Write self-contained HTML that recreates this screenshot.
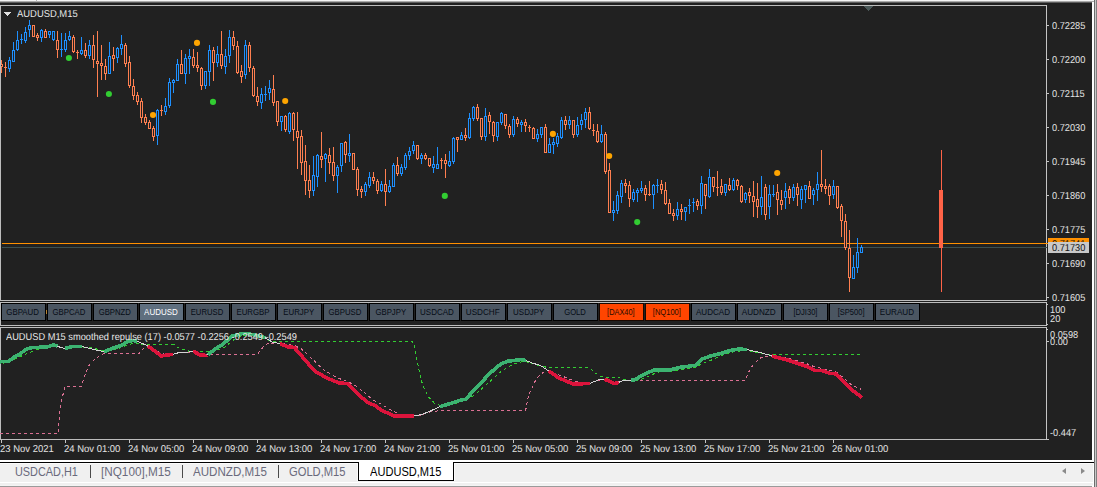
<!DOCTYPE html>
<html><head><meta charset="utf-8"><title>AUDUSD,M15</title>
<style>
html,body{margin:0;padding:0;}
body{width:1097px;height:487px;overflow:hidden;background:#212121;position:relative;font-family:"Liberation Sans",Arial,sans-serif;}
div{position:absolute;box-sizing:border-box;}
.h{left:0;width:1097px;height:1px;}
.frame{left:0;width:1046px;border:1px solid #bdbdbd;border-right:none;border-bottom:1px solid #bdbdbd;}
.axis{left:1046px;width:1px;background:#c4c4c4;}
.pl{left:1052px;font-size:10px;text-rendering:geometricPrecision;line-height:12px;color:#e4e4e4;white-space:nowrap;transform:scaleX(.924);transform-origin:0 0;}
.tick{left:1047px;width:2px;height:1px;background:#c4c4c4;}
.btn{top:303px;width:45px;height:18px;border:1px solid #000;background:#4b5662;color:#060c16;font-size:8.5px;line-height:16px;text-align:center;white-space:nowrap;}
.btn span{display:inline-block;transform-origin:50% 50%;position:relative;left:-0.5px;}
.btn.sel{background:#5f6f7f;color:#fff;}
.btn.hot{background:#ff4500;color:#2a0c00;border-color:#1a0800;}
.tt{top:440px;width:1px;height:3px;background:#c4c4c4;}
.tl{top:444px;font-size:10px;text-rendering:geometricPrecision;line-height:12px;color:#e4e4e4;white-space:nowrap;transform:scaleX(.948);transform-origin:0 0;}
.tab{top:464px;height:16px;font-size:12px;line-height:16px;color:#6a6a7c;white-space:nowrap;transform-origin:0 0;}
.sep{top:465px;width:1px;height:13px;background:#4a4a4a;}
svg{position:absolute;left:0;top:0;}
</style></head><body>
<!-- top strip -->
<div class="h" style="top:0;background:#f4f4f4"></div>
<div class="h" style="top:1px;background:#aaaaaa"></div>
<div class="h" style="top:2px;background:#5c5c5c"></div>
<div class="h" style="top:3px;height:2px;background:#202020"></div>
<div style="left:36px;top:0;width:1px;height:2px;background:#b0b0b0"></div>
<!-- right window edge -->

<!-- panels -->
<div class="frame" style="top:5px;height:296px"></div>
<div class="frame" style="top:302px;height:24px"></div>
<div class="frame" style="top:327px;height:113px"></div>
<div class="axis" style="top:5px;height:296px"></div>
<div class="axis" style="top:302px;height:24px"></div>
<div class="axis" style="top:327px;height:113px"></div>

<svg width="1097" height="487" viewBox="0 0 1097 487">
<g shape-rendering="crispEdges">
<rect x="2" y="243" width="1046" height="1" fill="#ff9000"/>
<rect x="2" y="247" width="1045" height="1" fill="#3c5050"/>
<rect x="1" y="60" width="1" height="13" fill="#ff7f50"/>
<rect x="0" y="64" width="3" height="3" fill="#ff7f50"/>
<rect x="1" y="65" width="1" height="1" fill="#212121"/>
<rect x="5" y="62" width="1" height="15" fill="#ff7f50"/>
<rect x="4" y="67" width="3" height="1" fill="#ff7f50"/>
<rect x="9" y="57" width="1" height="15" fill="#1e90ff"/>
<rect x="8" y="60" width="3" height="9" fill="#1e90ff"/>
<rect x="9" y="61" width="1" height="7" fill="#212121"/>
<rect x="13" y="42" width="1" height="20" fill="#1e90ff"/>
<rect x="12" y="50" width="3" height="12" fill="#1e90ff"/>
<rect x="13" y="51" width="1" height="10" fill="#212121"/>
<rect x="17" y="31" width="1" height="20" fill="#1e90ff"/>
<rect x="16" y="40" width="3" height="10" fill="#1e90ff"/>
<rect x="17" y="41" width="1" height="8" fill="#212121"/>
<rect x="21" y="34" width="1" height="10" fill="#1e90ff"/>
<rect x="20" y="39" width="3" height="1" fill="#1e90ff"/>
<rect x="25" y="27" width="1" height="16" fill="#1e90ff"/>
<rect x="24" y="32" width="3" height="9" fill="#1e90ff"/>
<rect x="25" y="33" width="1" height="7" fill="#212121"/>
<rect x="29" y="20" width="1" height="17" fill="#1e90ff"/>
<rect x="28" y="25" width="3" height="5" fill="#1e90ff"/>
<rect x="29" y="26" width="1" height="3" fill="#212121"/>
<rect x="33" y="25" width="1" height="12" fill="#ff7f50"/>
<rect x="32" y="25" width="3" height="12" fill="#ff7f50"/>
<rect x="33" y="26" width="1" height="10" fill="#212121"/>
<rect x="37" y="33" width="1" height="8" fill="#ff7f50"/>
<rect x="36" y="35" width="3" height="3" fill="#ff7f50"/>
<rect x="37" y="36" width="1" height="1" fill="#212121"/>
<rect x="41" y="29" width="1" height="13" fill="#1e90ff"/>
<rect x="40" y="30" width="3" height="8" fill="#1e90ff"/>
<rect x="41" y="31" width="1" height="6" fill="#212121"/>
<rect x="45" y="29" width="1" height="9" fill="#ff7f50"/>
<rect x="44" y="31" width="3" height="7" fill="#ff7f50"/>
<rect x="45" y="32" width="1" height="5" fill="#212121"/>
<rect x="49" y="31" width="1" height="7" fill="#1e90ff"/>
<rect x="48" y="31" width="3" height="4" fill="#1e90ff"/>
<rect x="49" y="32" width="1" height="2" fill="#212121"/>
<rect x="53" y="31" width="1" height="10" fill="#1e90ff"/>
<rect x="52" y="31" width="3" height="9" fill="#1e90ff"/>
<rect x="53" y="32" width="1" height="7" fill="#212121"/>
<rect x="57" y="31" width="1" height="27" fill="#ff7f50"/>
<rect x="56" y="40" width="3" height="10" fill="#ff7f50"/>
<rect x="57" y="41" width="1" height="8" fill="#212121"/>
<rect x="61" y="33" width="1" height="24" fill="#1e90ff"/>
<rect x="60" y="49" width="3" height="1" fill="#1e90ff"/>
<rect x="65" y="33" width="1" height="19" fill="#1e90ff"/>
<rect x="64" y="40" width="3" height="10" fill="#1e90ff"/>
<rect x="65" y="41" width="1" height="8" fill="#212121"/>
<rect x="69" y="31" width="1" height="10" fill="#1e90ff"/>
<rect x="68" y="36" width="3" height="4" fill="#1e90ff"/>
<rect x="69" y="37" width="1" height="2" fill="#212121"/>
<rect x="73" y="35" width="1" height="18" fill="#ff7f50"/>
<rect x="72" y="37" width="3" height="15" fill="#ff7f50"/>
<rect x="73" y="38" width="1" height="13" fill="#212121"/>
<rect x="77" y="50" width="1" height="9" fill="#ff7f50"/>
<rect x="76" y="52" width="3" height="1" fill="#ff7f50"/>
<rect x="81" y="37" width="1" height="18" fill="#1e90ff"/>
<rect x="80" y="50" width="3" height="4" fill="#1e90ff"/>
<rect x="81" y="51" width="1" height="2" fill="#212121"/>
<rect x="85" y="43" width="1" height="15" fill="#ff7f50"/>
<rect x="84" y="50" width="3" height="6" fill="#ff7f50"/>
<rect x="85" y="51" width="1" height="4" fill="#212121"/>
<rect x="89" y="40" width="1" height="19" fill="#1e90ff"/>
<rect x="88" y="45" width="3" height="11" fill="#1e90ff"/>
<rect x="89" y="46" width="1" height="9" fill="#212121"/>
<rect x="93" y="35" width="1" height="33" fill="#ff7f50"/>
<rect x="92" y="45" width="3" height="15" fill="#ff7f50"/>
<rect x="93" y="46" width="1" height="13" fill="#212121"/>
<rect x="97" y="31" width="1" height="66" fill="#ff7f50"/>
<rect x="96" y="61" width="3" height="3" fill="#ff7f50"/>
<rect x="97" y="62" width="1" height="1" fill="#212121"/>
<rect x="101" y="45" width="1" height="35" fill="#ff7f50"/>
<rect x="100" y="63" width="3" height="3" fill="#ff7f50"/>
<rect x="101" y="64" width="1" height="1" fill="#212121"/>
<rect x="105" y="59" width="1" height="21" fill="#ff7f50"/>
<rect x="104" y="66" width="3" height="8" fill="#ff7f50"/>
<rect x="105" y="67" width="1" height="6" fill="#212121"/>
<rect x="109" y="42" width="1" height="32" fill="#1e90ff"/>
<rect x="108" y="56" width="3" height="18" fill="#1e90ff"/>
<rect x="109" y="57" width="1" height="16" fill="#212121"/>
<rect x="113" y="47" width="1" height="24" fill="#ff7f50"/>
<rect x="112" y="55" width="3" height="4" fill="#ff7f50"/>
<rect x="113" y="56" width="1" height="2" fill="#212121"/>
<rect x="117" y="47" width="1" height="16" fill="#1e90ff"/>
<rect x="116" y="48" width="3" height="10" fill="#1e90ff"/>
<rect x="117" y="49" width="1" height="8" fill="#212121"/>
<rect x="121" y="35" width="1" height="20" fill="#1e90ff"/>
<rect x="120" y="44" width="3" height="5" fill="#1e90ff"/>
<rect x="121" y="45" width="1" height="3" fill="#212121"/>
<rect x="125" y="43" width="1" height="24" fill="#ff7f50"/>
<rect x="124" y="45" width="3" height="19" fill="#ff7f50"/>
<rect x="125" y="46" width="1" height="17" fill="#212121"/>
<rect x="129" y="56" width="1" height="32" fill="#ff7f50"/>
<rect x="128" y="62" width="3" height="24" fill="#ff7f50"/>
<rect x="129" y="63" width="1" height="22" fill="#212121"/>
<rect x="133" y="79" width="1" height="21" fill="#ff7f50"/>
<rect x="132" y="86" width="3" height="10" fill="#ff7f50"/>
<rect x="133" y="87" width="1" height="8" fill="#212121"/>
<rect x="137" y="92" width="1" height="13" fill="#ff7f50"/>
<rect x="136" y="95" width="3" height="7" fill="#ff7f50"/>
<rect x="137" y="96" width="1" height="5" fill="#212121"/>
<rect x="141" y="98" width="1" height="25" fill="#ff7f50"/>
<rect x="140" y="101" width="3" height="17" fill="#ff7f50"/>
<rect x="141" y="102" width="1" height="15" fill="#212121"/>
<rect x="145" y="114" width="1" height="11" fill="#ff7f50"/>
<rect x="144" y="117" width="3" height="6" fill="#ff7f50"/>
<rect x="145" y="118" width="1" height="4" fill="#212121"/>
<rect x="149" y="120" width="1" height="9" fill="#ff7f50"/>
<rect x="148" y="122" width="3" height="7" fill="#ff7f50"/>
<rect x="149" y="123" width="1" height="5" fill="#212121"/>
<rect x="153" y="126" width="1" height="15" fill="#ff7f50"/>
<rect x="152" y="128" width="3" height="9" fill="#ff7f50"/>
<rect x="153" y="129" width="1" height="7" fill="#212121"/>
<rect x="157" y="109" width="1" height="36" fill="#1e90ff"/>
<rect x="156" y="110" width="3" height="26" fill="#1e90ff"/>
<rect x="157" y="111" width="1" height="24" fill="#212121"/>
<rect x="161" y="105" width="1" height="11" fill="#ff7f50"/>
<rect x="160" y="110" width="3" height="1" fill="#ff7f50"/>
<rect x="165" y="98" width="1" height="17" fill="#1e90ff"/>
<rect x="164" y="106" width="3" height="6" fill="#1e90ff"/>
<rect x="165" y="107" width="1" height="4" fill="#212121"/>
<rect x="169" y="78" width="1" height="30" fill="#1e90ff"/>
<rect x="168" y="82" width="3" height="24" fill="#1e90ff"/>
<rect x="169" y="83" width="1" height="22" fill="#212121"/>
<rect x="173" y="79" width="1" height="14" fill="#1e90ff"/>
<rect x="172" y="80" width="3" height="3" fill="#1e90ff"/>
<rect x="173" y="81" width="1" height="1" fill="#212121"/>
<rect x="177" y="59" width="1" height="22" fill="#1e90ff"/>
<rect x="176" y="64" width="3" height="17" fill="#1e90ff"/>
<rect x="177" y="65" width="1" height="15" fill="#212121"/>
<rect x="181" y="50" width="1" height="24" fill="#ff7f50"/>
<rect x="180" y="64" width="3" height="10" fill="#ff7f50"/>
<rect x="181" y="65" width="1" height="8" fill="#212121"/>
<rect x="185" y="54" width="1" height="30" fill="#1e90ff"/>
<rect x="184" y="58" width="3" height="16" fill="#1e90ff"/>
<rect x="185" y="59" width="1" height="14" fill="#212121"/>
<rect x="189" y="49" width="1" height="25" fill="#1e90ff"/>
<rect x="188" y="56" width="3" height="3" fill="#1e90ff"/>
<rect x="189" y="57" width="1" height="1" fill="#212121"/>
<rect x="193" y="49" width="1" height="19" fill="#ff7f50"/>
<rect x="192" y="57" width="3" height="9" fill="#ff7f50"/>
<rect x="193" y="58" width="1" height="7" fill="#212121"/>
<rect x="197" y="52" width="1" height="20" fill="#ff7f50"/>
<rect x="196" y="65" width="3" height="3" fill="#ff7f50"/>
<rect x="197" y="66" width="1" height="1" fill="#212121"/>
<rect x="201" y="67" width="1" height="23" fill="#ff7f50"/>
<rect x="200" y="68" width="3" height="18" fill="#ff7f50"/>
<rect x="201" y="69" width="1" height="16" fill="#212121"/>
<rect x="205" y="71" width="1" height="18" fill="#1e90ff"/>
<rect x="204" y="71" width="3" height="15" fill="#1e90ff"/>
<rect x="205" y="72" width="1" height="13" fill="#212121"/>
<rect x="209" y="45" width="1" height="41" fill="#1e90ff"/>
<rect x="208" y="50" width="3" height="22" fill="#1e90ff"/>
<rect x="209" y="51" width="1" height="20" fill="#212121"/>
<rect x="213" y="47" width="1" height="34" fill="#ff7f50"/>
<rect x="212" y="50" width="3" height="13" fill="#ff7f50"/>
<rect x="213" y="51" width="1" height="11" fill="#212121"/>
<rect x="217" y="46" width="1" height="21" fill="#1e90ff"/>
<rect x="216" y="54" width="3" height="9" fill="#1e90ff"/>
<rect x="217" y="55" width="1" height="7" fill="#212121"/>
<rect x="221" y="31" width="1" height="38" fill="#ff7f50"/>
<rect x="220" y="54" width="3" height="12" fill="#ff7f50"/>
<rect x="221" y="55" width="1" height="10" fill="#212121"/>
<rect x="225" y="49" width="1" height="25" fill="#1e90ff"/>
<rect x="224" y="56" width="3" height="11" fill="#1e90ff"/>
<rect x="225" y="57" width="1" height="9" fill="#212121"/>
<rect x="229" y="30" width="1" height="33" fill="#1e90ff"/>
<rect x="228" y="37" width="3" height="19" fill="#1e90ff"/>
<rect x="229" y="38" width="1" height="17" fill="#212121"/>
<rect x="233" y="31" width="1" height="19" fill="#ff7f50"/>
<rect x="232" y="37" width="3" height="9" fill="#ff7f50"/>
<rect x="233" y="38" width="1" height="7" fill="#212121"/>
<rect x="237" y="41" width="1" height="33" fill="#ff7f50"/>
<rect x="236" y="46" width="3" height="27" fill="#ff7f50"/>
<rect x="237" y="47" width="1" height="25" fill="#212121"/>
<rect x="241" y="65" width="1" height="18" fill="#ff7f50"/>
<rect x="240" y="71" width="3" height="6" fill="#ff7f50"/>
<rect x="241" y="72" width="1" height="4" fill="#212121"/>
<rect x="245" y="40" width="1" height="39" fill="#1e90ff"/>
<rect x="244" y="45" width="3" height="30" fill="#1e90ff"/>
<rect x="245" y="46" width="1" height="28" fill="#212121"/>
<rect x="249" y="42" width="1" height="30" fill="#ff7f50"/>
<rect x="248" y="45" width="3" height="23" fill="#ff7f50"/>
<rect x="249" y="46" width="1" height="21" fill="#212121"/>
<rect x="253" y="66" width="1" height="31" fill="#ff7f50"/>
<rect x="252" y="68" width="3" height="28" fill="#ff7f50"/>
<rect x="253" y="69" width="1" height="26" fill="#212121"/>
<rect x="257" y="87" width="1" height="19" fill="#ff7f50"/>
<rect x="256" y="96" width="3" height="6" fill="#ff7f50"/>
<rect x="257" y="97" width="1" height="4" fill="#212121"/>
<rect x="261" y="88" width="1" height="21" fill="#1e90ff"/>
<rect x="260" y="94" width="3" height="9" fill="#1e90ff"/>
<rect x="261" y="95" width="1" height="7" fill="#212121"/>
<rect x="265" y="86" width="1" height="15" fill="#1e90ff"/>
<rect x="264" y="94" width="3" height="1" fill="#1e90ff"/>
<rect x="269" y="80" width="1" height="20" fill="#1e90ff"/>
<rect x="268" y="88" width="3" height="5" fill="#1e90ff"/>
<rect x="269" y="89" width="1" height="3" fill="#212121"/>
<rect x="273" y="75" width="1" height="31" fill="#ff7f50"/>
<rect x="272" y="89" width="3" height="14" fill="#ff7f50"/>
<rect x="273" y="90" width="1" height="12" fill="#212121"/>
<rect x="277" y="101" width="1" height="25" fill="#ff7f50"/>
<rect x="276" y="101" width="3" height="21" fill="#ff7f50"/>
<rect x="277" y="102" width="1" height="19" fill="#212121"/>
<rect x="281" y="116" width="1" height="15" fill="#1e90ff"/>
<rect x="280" y="116" width="3" height="6" fill="#1e90ff"/>
<rect x="281" y="117" width="1" height="4" fill="#212121"/>
<rect x="285" y="115" width="1" height="17" fill="#ff7f50"/>
<rect x="284" y="116" width="3" height="14" fill="#ff7f50"/>
<rect x="285" y="117" width="1" height="12" fill="#212121"/>
<rect x="289" y="112" width="1" height="22" fill="#1e90ff"/>
<rect x="288" y="113" width="3" height="19" fill="#1e90ff"/>
<rect x="289" y="114" width="1" height="17" fill="#212121"/>
<rect x="293" y="112" width="1" height="29" fill="#ff7f50"/>
<rect x="292" y="113" width="3" height="17" fill="#ff7f50"/>
<rect x="293" y="114" width="1" height="15" fill="#212121"/>
<rect x="297" y="112" width="1" height="57" fill="#ff7f50"/>
<rect x="296" y="131" width="3" height="7" fill="#ff7f50"/>
<rect x="297" y="132" width="1" height="5" fill="#212121"/>
<rect x="301" y="130" width="1" height="45" fill="#ff7f50"/>
<rect x="300" y="136" width="3" height="27" fill="#ff7f50"/>
<rect x="301" y="137" width="1" height="25" fill="#212121"/>
<rect x="305" y="145" width="1" height="50" fill="#ff7f50"/>
<rect x="304" y="161" width="3" height="20" fill="#ff7f50"/>
<rect x="305" y="162" width="1" height="18" fill="#212121"/>
<rect x="309" y="165" width="1" height="33" fill="#ff7f50"/>
<rect x="308" y="180" width="3" height="11" fill="#ff7f50"/>
<rect x="309" y="181" width="1" height="9" fill="#212121"/>
<rect x="313" y="156" width="1" height="40" fill="#1e90ff"/>
<rect x="312" y="175" width="3" height="16" fill="#1e90ff"/>
<rect x="313" y="176" width="1" height="14" fill="#212121"/>
<rect x="317" y="154" width="1" height="33" fill="#1e90ff"/>
<rect x="316" y="155" width="3" height="22" fill="#1e90ff"/>
<rect x="317" y="156" width="1" height="20" fill="#212121"/>
<rect x="321" y="132" width="1" height="36" fill="#ff7f50"/>
<rect x="320" y="156" width="3" height="4" fill="#ff7f50"/>
<rect x="321" y="157" width="1" height="2" fill="#212121"/>
<rect x="325" y="153" width="1" height="29" fill="#1e90ff"/>
<rect x="324" y="154" width="3" height="5" fill="#1e90ff"/>
<rect x="325" y="155" width="1" height="3" fill="#212121"/>
<rect x="329" y="148" width="1" height="26" fill="#ff7f50"/>
<rect x="328" y="155" width="3" height="8" fill="#ff7f50"/>
<rect x="329" y="156" width="1" height="6" fill="#212121"/>
<rect x="333" y="147" width="1" height="34" fill="#ff7f50"/>
<rect x="332" y="162" width="3" height="14" fill="#ff7f50"/>
<rect x="333" y="163" width="1" height="12" fill="#212121"/>
<rect x="337" y="165" width="1" height="28" fill="#1e90ff"/>
<rect x="336" y="167" width="3" height="9" fill="#1e90ff"/>
<rect x="337" y="168" width="1" height="7" fill="#212121"/>
<rect x="341" y="143" width="1" height="29" fill="#1e90ff"/>
<rect x="340" y="143" width="3" height="23" fill="#1e90ff"/>
<rect x="341" y="144" width="1" height="21" fill="#212121"/>
<rect x="345" y="141" width="1" height="22" fill="#ff7f50"/>
<rect x="344" y="142" width="3" height="13" fill="#ff7f50"/>
<rect x="345" y="143" width="1" height="11" fill="#212121"/>
<rect x="349" y="134" width="1" height="28" fill="#1e90ff"/>
<rect x="348" y="153" width="3" height="3" fill="#1e90ff"/>
<rect x="349" y="154" width="1" height="1" fill="#212121"/>
<rect x="353" y="153" width="1" height="17" fill="#ff7f50"/>
<rect x="352" y="153" width="3" height="17" fill="#ff7f50"/>
<rect x="353" y="154" width="1" height="15" fill="#212121"/>
<rect x="357" y="167" width="1" height="29" fill="#ff7f50"/>
<rect x="356" y="169" width="3" height="21" fill="#ff7f50"/>
<rect x="357" y="170" width="1" height="19" fill="#212121"/>
<rect x="361" y="186" width="1" height="12" fill="#ff7f50"/>
<rect x="360" y="189" width="3" height="3" fill="#ff7f50"/>
<rect x="361" y="190" width="1" height="1" fill="#212121"/>
<rect x="365" y="182" width="1" height="14" fill="#1e90ff"/>
<rect x="364" y="184" width="3" height="8" fill="#1e90ff"/>
<rect x="365" y="185" width="1" height="6" fill="#212121"/>
<rect x="369" y="172" width="1" height="16" fill="#1e90ff"/>
<rect x="368" y="177" width="3" height="9" fill="#1e90ff"/>
<rect x="369" y="178" width="1" height="7" fill="#212121"/>
<rect x="373" y="172" width="1" height="12" fill="#ff7f50"/>
<rect x="372" y="177" width="3" height="4" fill="#ff7f50"/>
<rect x="373" y="178" width="1" height="2" fill="#212121"/>
<rect x="377" y="179" width="1" height="15" fill="#ff7f50"/>
<rect x="376" y="181" width="3" height="10" fill="#ff7f50"/>
<rect x="377" y="182" width="1" height="8" fill="#212121"/>
<rect x="381" y="181" width="1" height="11" fill="#1e90ff"/>
<rect x="380" y="184" width="3" height="7" fill="#1e90ff"/>
<rect x="381" y="185" width="1" height="5" fill="#212121"/>
<rect x="385" y="169" width="1" height="37" fill="#ff7f50"/>
<rect x="384" y="184" width="3" height="8" fill="#ff7f50"/>
<rect x="385" y="185" width="1" height="6" fill="#212121"/>
<rect x="389" y="180" width="1" height="13" fill="#1e90ff"/>
<rect x="388" y="186" width="3" height="6" fill="#1e90ff"/>
<rect x="389" y="187" width="1" height="4" fill="#212121"/>
<rect x="393" y="163" width="1" height="24" fill="#1e90ff"/>
<rect x="392" y="165" width="3" height="22" fill="#1e90ff"/>
<rect x="393" y="166" width="1" height="20" fill="#212121"/>
<rect x="397" y="157" width="1" height="19" fill="#ff7f50"/>
<rect x="396" y="165" width="3" height="9" fill="#ff7f50"/>
<rect x="397" y="166" width="1" height="7" fill="#212121"/>
<rect x="401" y="164" width="1" height="12" fill="#1e90ff"/>
<rect x="400" y="167" width="3" height="7" fill="#1e90ff"/>
<rect x="401" y="168" width="1" height="5" fill="#212121"/>
<rect x="405" y="153" width="1" height="17" fill="#1e90ff"/>
<rect x="404" y="155" width="3" height="13" fill="#1e90ff"/>
<rect x="405" y="156" width="1" height="11" fill="#212121"/>
<rect x="409" y="147" width="1" height="13" fill="#1e90ff"/>
<rect x="408" y="151" width="3" height="5" fill="#1e90ff"/>
<rect x="409" y="152" width="1" height="3" fill="#212121"/>
<rect x="413" y="141" width="1" height="13" fill="#1e90ff"/>
<rect x="412" y="145" width="3" height="6" fill="#1e90ff"/>
<rect x="413" y="146" width="1" height="4" fill="#212121"/>
<rect x="417" y="145" width="1" height="15" fill="#ff7f50"/>
<rect x="416" y="145" width="3" height="14" fill="#ff7f50"/>
<rect x="417" y="146" width="1" height="12" fill="#212121"/>
<rect x="421" y="153" width="1" height="11" fill="#1e90ff"/>
<rect x="420" y="155" width="3" height="4" fill="#1e90ff"/>
<rect x="421" y="156" width="1" height="2" fill="#212121"/>
<rect x="425" y="153" width="1" height="7" fill="#ff7f50"/>
<rect x="424" y="155" width="3" height="4" fill="#ff7f50"/>
<rect x="425" y="156" width="1" height="2" fill="#212121"/>
<rect x="429" y="158" width="1" height="9" fill="#ff7f50"/>
<rect x="428" y="158" width="3" height="8" fill="#ff7f50"/>
<rect x="429" y="159" width="1" height="6" fill="#212121"/>
<rect x="433" y="156" width="1" height="17" fill="#1e90ff"/>
<rect x="432" y="164" width="3" height="4" fill="#1e90ff"/>
<rect x="433" y="165" width="1" height="2" fill="#212121"/>
<rect x="437" y="147" width="1" height="22" fill="#1e90ff"/>
<rect x="436" y="164" width="3" height="5" fill="#1e90ff"/>
<rect x="437" y="165" width="1" height="3" fill="#212121"/>
<rect x="441" y="158" width="1" height="11" fill="#ff7f50"/>
<rect x="440" y="160" width="3" height="1" fill="#ff7f50"/>
<rect x="445" y="154" width="1" height="24" fill="#ff7f50"/>
<rect x="444" y="160" width="3" height="4" fill="#ff7f50"/>
<rect x="445" y="161" width="1" height="2" fill="#212121"/>
<rect x="449" y="151" width="1" height="16" fill="#1e90ff"/>
<rect x="448" y="161" width="3" height="5" fill="#1e90ff"/>
<rect x="449" y="162" width="1" height="3" fill="#212121"/>
<rect x="453" y="137" width="1" height="27" fill="#1e90ff"/>
<rect x="452" y="138" width="3" height="24" fill="#1e90ff"/>
<rect x="453" y="139" width="1" height="22" fill="#212121"/>
<rect x="457" y="137" width="1" height="15" fill="#ff7f50"/>
<rect x="456" y="137" width="3" height="3" fill="#ff7f50"/>
<rect x="457" y="138" width="1" height="1" fill="#212121"/>
<rect x="461" y="132" width="1" height="8" fill="#1e90ff"/>
<rect x="460" y="135" width="3" height="5" fill="#1e90ff"/>
<rect x="461" y="136" width="1" height="3" fill="#212121"/>
<rect x="465" y="128" width="1" height="13" fill="#ff7f50"/>
<rect x="464" y="135" width="3" height="3" fill="#ff7f50"/>
<rect x="465" y="136" width="1" height="1" fill="#212121"/>
<rect x="469" y="113" width="1" height="26" fill="#1e90ff"/>
<rect x="468" y="118" width="3" height="20" fill="#1e90ff"/>
<rect x="469" y="119" width="1" height="18" fill="#212121"/>
<rect x="473" y="106" width="1" height="15" fill="#1e90ff"/>
<rect x="472" y="107" width="3" height="12" fill="#1e90ff"/>
<rect x="473" y="108" width="1" height="10" fill="#212121"/>
<rect x="477" y="104" width="1" height="17" fill="#ff7f50"/>
<rect x="476" y="107" width="3" height="12" fill="#ff7f50"/>
<rect x="477" y="108" width="1" height="10" fill="#212121"/>
<rect x="481" y="118" width="1" height="22" fill="#ff7f50"/>
<rect x="480" y="118" width="3" height="19" fill="#ff7f50"/>
<rect x="481" y="119" width="1" height="17" fill="#212121"/>
<rect x="485" y="108" width="1" height="33" fill="#1e90ff"/>
<rect x="484" y="116" width="3" height="21" fill="#1e90ff"/>
<rect x="485" y="117" width="1" height="19" fill="#212121"/>
<rect x="489" y="112" width="1" height="22" fill="#ff7f50"/>
<rect x="488" y="115" width="3" height="7" fill="#ff7f50"/>
<rect x="489" y="116" width="1" height="5" fill="#212121"/>
<rect x="493" y="121" width="1" height="21" fill="#ff7f50"/>
<rect x="492" y="122" width="3" height="14" fill="#ff7f50"/>
<rect x="493" y="123" width="1" height="12" fill="#212121"/>
<rect x="497" y="122" width="1" height="19" fill="#1e90ff"/>
<rect x="496" y="122" width="3" height="15" fill="#1e90ff"/>
<rect x="497" y="123" width="1" height="13" fill="#212121"/>
<rect x="501" y="112" width="1" height="13" fill="#1e90ff"/>
<rect x="500" y="113" width="3" height="10" fill="#1e90ff"/>
<rect x="501" y="114" width="1" height="8" fill="#212121"/>
<rect x="505" y="114" width="1" height="15" fill="#ff7f50"/>
<rect x="504" y="114" width="3" height="12" fill="#ff7f50"/>
<rect x="505" y="115" width="1" height="10" fill="#212121"/>
<rect x="509" y="124" width="1" height="14" fill="#ff7f50"/>
<rect x="508" y="126" width="3" height="9" fill="#ff7f50"/>
<rect x="509" y="127" width="1" height="7" fill="#212121"/>
<rect x="513" y="116" width="1" height="21" fill="#1e90ff"/>
<rect x="512" y="119" width="3" height="16" fill="#1e90ff"/>
<rect x="513" y="120" width="1" height="14" fill="#212121"/>
<rect x="517" y="117" width="1" height="10" fill="#ff7f50"/>
<rect x="516" y="119" width="3" height="5" fill="#ff7f50"/>
<rect x="517" y="120" width="1" height="3" fill="#212121"/>
<rect x="521" y="120" width="1" height="12" fill="#1e90ff"/>
<rect x="520" y="122" width="3" height="3" fill="#1e90ff"/>
<rect x="521" y="123" width="1" height="1" fill="#212121"/>
<rect x="525" y="119" width="1" height="13" fill="#ff7f50"/>
<rect x="524" y="122" width="3" height="4" fill="#ff7f50"/>
<rect x="525" y="123" width="1" height="2" fill="#212121"/>
<rect x="529" y="125" width="1" height="7" fill="#ff7f50"/>
<rect x="528" y="127" width="3" height="1" fill="#ff7f50"/>
<rect x="533" y="127" width="1" height="12" fill="#ff7f50"/>
<rect x="532" y="128" width="3" height="11" fill="#ff7f50"/>
<rect x="533" y="129" width="1" height="9" fill="#212121"/>
<rect x="537" y="129" width="1" height="13" fill="#1e90ff"/>
<rect x="536" y="134" width="3" height="5" fill="#1e90ff"/>
<rect x="537" y="135" width="1" height="3" fill="#212121"/>
<rect x="541" y="127" width="1" height="11" fill="#1e90ff"/>
<rect x="540" y="127" width="3" height="8" fill="#1e90ff"/>
<rect x="541" y="128" width="1" height="6" fill="#212121"/>
<rect x="545" y="124" width="1" height="29" fill="#ff7f50"/>
<rect x="544" y="127" width="3" height="26" fill="#ff7f50"/>
<rect x="545" y="128" width="1" height="24" fill="#212121"/>
<rect x="549" y="138" width="1" height="15" fill="#1e90ff"/>
<rect x="548" y="144" width="3" height="9" fill="#1e90ff"/>
<rect x="549" y="145" width="1" height="7" fill="#212121"/>
<rect x="553" y="138" width="1" height="16" fill="#1e90ff"/>
<rect x="552" y="142" width="3" height="3" fill="#1e90ff"/>
<rect x="553" y="143" width="1" height="1" fill="#212121"/>
<rect x="557" y="133" width="1" height="14" fill="#1e90ff"/>
<rect x="556" y="136" width="3" height="8" fill="#1e90ff"/>
<rect x="557" y="137" width="1" height="6" fill="#212121"/>
<rect x="561" y="117" width="1" height="22" fill="#1e90ff"/>
<rect x="560" y="120" width="3" height="18" fill="#1e90ff"/>
<rect x="561" y="121" width="1" height="16" fill="#212121"/>
<rect x="565" y="116" width="1" height="14" fill="#ff7f50"/>
<rect x="564" y="120" width="3" height="5" fill="#ff7f50"/>
<rect x="565" y="121" width="1" height="3" fill="#212121"/>
<rect x="569" y="116" width="1" height="13" fill="#1e90ff"/>
<rect x="568" y="120" width="3" height="5" fill="#1e90ff"/>
<rect x="569" y="121" width="1" height="3" fill="#212121"/>
<rect x="573" y="120" width="1" height="18" fill="#ff7f50"/>
<rect x="572" y="120" width="3" height="15" fill="#ff7f50"/>
<rect x="573" y="121" width="1" height="13" fill="#212121"/>
<rect x="577" y="117" width="1" height="20" fill="#1e90ff"/>
<rect x="576" y="125" width="3" height="10" fill="#1e90ff"/>
<rect x="577" y="126" width="1" height="8" fill="#212121"/>
<rect x="581" y="114" width="1" height="16" fill="#1e90ff"/>
<rect x="580" y="120" width="3" height="5" fill="#1e90ff"/>
<rect x="581" y="121" width="1" height="3" fill="#212121"/>
<rect x="585" y="108" width="1" height="20" fill="#1e90ff"/>
<rect x="584" y="112" width="3" height="8" fill="#1e90ff"/>
<rect x="585" y="113" width="1" height="6" fill="#212121"/>
<rect x="589" y="107" width="1" height="23" fill="#ff7f50"/>
<rect x="588" y="112" width="3" height="17" fill="#ff7f50"/>
<rect x="589" y="113" width="1" height="15" fill="#212121"/>
<rect x="593" y="124" width="1" height="12" fill="#ff7f50"/>
<rect x="592" y="130" width="3" height="1" fill="#ff7f50"/>
<rect x="597" y="124" width="1" height="19" fill="#ff7f50"/>
<rect x="596" y="131" width="3" height="11" fill="#ff7f50"/>
<rect x="597" y="132" width="1" height="9" fill="#212121"/>
<rect x="601" y="125" width="1" height="18" fill="#1e90ff"/>
<rect x="600" y="134" width="3" height="8" fill="#1e90ff"/>
<rect x="601" y="135" width="1" height="6" fill="#212121"/>
<rect x="605" y="132" width="1" height="42" fill="#ff7f50"/>
<rect x="604" y="134" width="3" height="38" fill="#ff7f50"/>
<rect x="605" y="135" width="1" height="36" fill="#212121"/>
<rect x="609" y="163" width="1" height="50" fill="#ff7f50"/>
<rect x="608" y="170" width="3" height="43" fill="#ff7f50"/>
<rect x="609" y="171" width="1" height="41" fill="#212121"/>
<rect x="613" y="201" width="1" height="20" fill="#1e90ff"/>
<rect x="612" y="210" width="3" height="3" fill="#1e90ff"/>
<rect x="613" y="211" width="1" height="1" fill="#212121"/>
<rect x="617" y="191" width="1" height="23" fill="#1e90ff"/>
<rect x="616" y="195" width="3" height="16" fill="#1e90ff"/>
<rect x="617" y="196" width="1" height="14" fill="#212121"/>
<rect x="621" y="180" width="1" height="23" fill="#1e90ff"/>
<rect x="620" y="183" width="3" height="14" fill="#1e90ff"/>
<rect x="621" y="184" width="1" height="12" fill="#212121"/>
<rect x="625" y="179" width="1" height="14" fill="#ff7f50"/>
<rect x="624" y="183" width="3" height="3" fill="#ff7f50"/>
<rect x="625" y="184" width="1" height="1" fill="#212121"/>
<rect x="629" y="181" width="1" height="26" fill="#ff7f50"/>
<rect x="628" y="185" width="3" height="14" fill="#ff7f50"/>
<rect x="629" y="186" width="1" height="12" fill="#212121"/>
<rect x="633" y="189" width="1" height="13" fill="#1e90ff"/>
<rect x="632" y="192" width="3" height="8" fill="#1e90ff"/>
<rect x="633" y="193" width="1" height="6" fill="#212121"/>
<rect x="637" y="188" width="1" height="14" fill="#1e90ff"/>
<rect x="636" y="190" width="3" height="3" fill="#1e90ff"/>
<rect x="637" y="191" width="1" height="1" fill="#212121"/>
<rect x="641" y="181" width="1" height="12" fill="#1e90ff"/>
<rect x="640" y="188" width="3" height="3" fill="#1e90ff"/>
<rect x="641" y="189" width="1" height="1" fill="#212121"/>
<rect x="645" y="185" width="1" height="16" fill="#ff7f50"/>
<rect x="644" y="188" width="3" height="7" fill="#ff7f50"/>
<rect x="645" y="189" width="1" height="5" fill="#212121"/>
<rect x="649" y="181" width="1" height="15" fill="#ff7f50"/>
<rect x="648" y="194" width="3" height="1" fill="#ff7f50"/>
<rect x="653" y="184" width="1" height="25" fill="#1e90ff"/>
<rect x="652" y="185" width="3" height="10" fill="#1e90ff"/>
<rect x="653" y="186" width="1" height="8" fill="#212121"/>
<rect x="657" y="179" width="1" height="14" fill="#1e90ff"/>
<rect x="656" y="185" width="3" height="1" fill="#1e90ff"/>
<rect x="661" y="180" width="1" height="14" fill="#ff7f50"/>
<rect x="660" y="184" width="3" height="6" fill="#ff7f50"/>
<rect x="661" y="185" width="1" height="4" fill="#212121"/>
<rect x="665" y="182" width="1" height="23" fill="#ff7f50"/>
<rect x="664" y="190" width="3" height="14" fill="#ff7f50"/>
<rect x="665" y="191" width="1" height="12" fill="#212121"/>
<rect x="669" y="199" width="1" height="15" fill="#ff7f50"/>
<rect x="668" y="203" width="3" height="11" fill="#ff7f50"/>
<rect x="669" y="204" width="1" height="9" fill="#212121"/>
<rect x="673" y="209" width="1" height="12" fill="#ff7f50"/>
<rect x="672" y="213" width="3" height="3" fill="#ff7f50"/>
<rect x="673" y="214" width="1" height="1" fill="#212121"/>
<rect x="677" y="202" width="1" height="18" fill="#1e90ff"/>
<rect x="676" y="209" width="3" height="7" fill="#1e90ff"/>
<rect x="677" y="210" width="1" height="5" fill="#212121"/>
<rect x="681" y="204" width="1" height="16" fill="#ff7f50"/>
<rect x="680" y="209" width="3" height="3" fill="#ff7f50"/>
<rect x="681" y="210" width="1" height="1" fill="#212121"/>
<rect x="685" y="207" width="1" height="14" fill="#1e90ff"/>
<rect x="684" y="207" width="3" height="5" fill="#1e90ff"/>
<rect x="685" y="208" width="1" height="3" fill="#212121"/>
<rect x="689" y="199" width="1" height="15" fill="#1e90ff"/>
<rect x="688" y="205" width="3" height="1" fill="#1e90ff"/>
<rect x="693" y="198" width="1" height="14" fill="#1e90ff"/>
<rect x="692" y="202" width="3" height="1" fill="#1e90ff"/>
<rect x="697" y="199" width="1" height="11" fill="#ff7f50"/>
<rect x="696" y="201" width="3" height="5" fill="#ff7f50"/>
<rect x="697" y="202" width="1" height="3" fill="#212121"/>
<rect x="701" y="176" width="1" height="38" fill="#1e90ff"/>
<rect x="700" y="183" width="3" height="23" fill="#1e90ff"/>
<rect x="701" y="184" width="1" height="21" fill="#212121"/>
<rect x="705" y="184" width="1" height="25" fill="#ff7f50"/>
<rect x="704" y="184" width="3" height="12" fill="#ff7f50"/>
<rect x="705" y="185" width="1" height="10" fill="#212121"/>
<rect x="709" y="169" width="1" height="29" fill="#1e90ff"/>
<rect x="708" y="177" width="3" height="20" fill="#1e90ff"/>
<rect x="709" y="178" width="1" height="18" fill="#212121"/>
<rect x="713" y="177" width="1" height="15" fill="#ff7f50"/>
<rect x="712" y="177" width="3" height="10" fill="#ff7f50"/>
<rect x="713" y="178" width="1" height="8" fill="#212121"/>
<rect x="717" y="171" width="1" height="25" fill="#ff7f50"/>
<rect x="716" y="187" width="3" height="1" fill="#ff7f50"/>
<rect x="721" y="179" width="1" height="16" fill="#ff7f50"/>
<rect x="720" y="186" width="3" height="7" fill="#ff7f50"/>
<rect x="721" y="187" width="1" height="5" fill="#212121"/>
<rect x="725" y="184" width="1" height="12" fill="#1e90ff"/>
<rect x="724" y="184" width="3" height="9" fill="#1e90ff"/>
<rect x="725" y="185" width="1" height="7" fill="#212121"/>
<rect x="729" y="178" width="1" height="13" fill="#ff7f50"/>
<rect x="728" y="185" width="3" height="5" fill="#ff7f50"/>
<rect x="729" y="186" width="1" height="3" fill="#212121"/>
<rect x="733" y="178" width="1" height="13" fill="#1e90ff"/>
<rect x="732" y="180" width="3" height="10" fill="#1e90ff"/>
<rect x="733" y="181" width="1" height="8" fill="#212121"/>
<rect x="737" y="179" width="1" height="11" fill="#ff7f50"/>
<rect x="736" y="180" width="3" height="6" fill="#ff7f50"/>
<rect x="737" y="181" width="1" height="4" fill="#212121"/>
<rect x="741" y="185" width="1" height="18" fill="#ff7f50"/>
<rect x="740" y="186" width="3" height="16" fill="#ff7f50"/>
<rect x="741" y="187" width="1" height="14" fill="#212121"/>
<rect x="745" y="192" width="1" height="11" fill="#1e90ff"/>
<rect x="744" y="193" width="3" height="7" fill="#1e90ff"/>
<rect x="745" y="194" width="1" height="5" fill="#212121"/>
<rect x="749" y="188" width="1" height="15" fill="#ff7f50"/>
<rect x="748" y="192" width="3" height="4" fill="#ff7f50"/>
<rect x="749" y="193" width="1" height="2" fill="#212121"/>
<rect x="753" y="181" width="1" height="36" fill="#ff7f50"/>
<rect x="752" y="196" width="3" height="6" fill="#ff7f50"/>
<rect x="753" y="197" width="1" height="4" fill="#212121"/>
<rect x="757" y="183" width="1" height="35" fill="#ff7f50"/>
<rect x="756" y="199" width="3" height="8" fill="#ff7f50"/>
<rect x="757" y="200" width="1" height="6" fill="#212121"/>
<rect x="761" y="176" width="1" height="39" fill="#1e90ff"/>
<rect x="760" y="197" width="3" height="10" fill="#1e90ff"/>
<rect x="761" y="198" width="1" height="8" fill="#212121"/>
<rect x="765" y="184" width="1" height="36" fill="#ff7f50"/>
<rect x="764" y="187" width="3" height="28" fill="#ff7f50"/>
<rect x="765" y="188" width="1" height="26" fill="#212121"/>
<rect x="769" y="185" width="1" height="34" fill="#1e90ff"/>
<rect x="768" y="194" width="3" height="13" fill="#1e90ff"/>
<rect x="769" y="195" width="1" height="11" fill="#212121"/>
<rect x="773" y="185" width="1" height="12" fill="#1e90ff"/>
<rect x="772" y="194" width="3" height="1" fill="#1e90ff"/>
<rect x="777" y="184" width="1" height="31" fill="#ff7f50"/>
<rect x="776" y="192" width="3" height="8" fill="#ff7f50"/>
<rect x="777" y="193" width="1" height="6" fill="#212121"/>
<rect x="781" y="190" width="1" height="20" fill="#ff7f50"/>
<rect x="780" y="200" width="3" height="5" fill="#ff7f50"/>
<rect x="781" y="201" width="1" height="3" fill="#212121"/>
<rect x="785" y="183" width="1" height="26" fill="#1e90ff"/>
<rect x="784" y="191" width="3" height="7" fill="#1e90ff"/>
<rect x="785" y="192" width="1" height="5" fill="#212121"/>
<rect x="789" y="186" width="1" height="18" fill="#ff7f50"/>
<rect x="788" y="189" width="3" height="9" fill="#ff7f50"/>
<rect x="789" y="190" width="1" height="7" fill="#212121"/>
<rect x="793" y="184" width="1" height="17" fill="#1e90ff"/>
<rect x="792" y="187" width="3" height="11" fill="#1e90ff"/>
<rect x="793" y="188" width="1" height="9" fill="#212121"/>
<rect x="797" y="183" width="1" height="23" fill="#ff7f50"/>
<rect x="796" y="187" width="3" height="8" fill="#ff7f50"/>
<rect x="797" y="188" width="1" height="6" fill="#212121"/>
<rect x="801" y="186" width="1" height="23" fill="#1e90ff"/>
<rect x="800" y="189" width="3" height="11" fill="#1e90ff"/>
<rect x="801" y="190" width="1" height="9" fill="#212121"/>
<rect x="805" y="185" width="1" height="18" fill="#1e90ff"/>
<rect x="804" y="185" width="3" height="5" fill="#1e90ff"/>
<rect x="805" y="186" width="1" height="3" fill="#212121"/>
<rect x="809" y="181" width="1" height="18" fill="#ff7f50"/>
<rect x="808" y="186" width="3" height="13" fill="#ff7f50"/>
<rect x="809" y="187" width="1" height="11" fill="#212121"/>
<rect x="813" y="188" width="1" height="17" fill="#1e90ff"/>
<rect x="812" y="190" width="3" height="5" fill="#1e90ff"/>
<rect x="813" y="191" width="1" height="3" fill="#212121"/>
<rect x="817" y="172" width="1" height="29" fill="#1e90ff"/>
<rect x="816" y="184" width="3" height="6" fill="#1e90ff"/>
<rect x="817" y="185" width="1" height="4" fill="#212121"/>
<rect x="821" y="150" width="1" height="42" fill="#ff7f50"/>
<rect x="820" y="184" width="3" height="3" fill="#ff7f50"/>
<rect x="821" y="185" width="1" height="1" fill="#212121"/>
<rect x="825" y="179" width="1" height="15" fill="#ff7f50"/>
<rect x="824" y="186" width="3" height="3" fill="#ff7f50"/>
<rect x="825" y="187" width="1" height="1" fill="#212121"/>
<rect x="829" y="184" width="1" height="21" fill="#ff7f50"/>
<rect x="828" y="186" width="3" height="10" fill="#ff7f50"/>
<rect x="829" y="187" width="1" height="8" fill="#212121"/>
<rect x="833" y="180" width="1" height="19" fill="#1e90ff"/>
<rect x="832" y="186" width="3" height="9" fill="#1e90ff"/>
<rect x="833" y="187" width="1" height="7" fill="#212121"/>
<rect x="837" y="186" width="1" height="23" fill="#ff7f50"/>
<rect x="836" y="186" width="3" height="22" fill="#ff7f50"/>
<rect x="837" y="187" width="1" height="20" fill="#212121"/>
<rect x="841" y="204" width="1" height="33" fill="#ff7f50"/>
<rect x="840" y="206" width="3" height="15" fill="#ff7f50"/>
<rect x="841" y="207" width="1" height="13" fill="#212121"/>
<rect x="845" y="214" width="1" height="36" fill="#ff7f50"/>
<rect x="844" y="221" width="3" height="27" fill="#ff7f50"/>
<rect x="845" y="222" width="1" height="25" fill="#212121"/>
<rect x="849" y="230" width="1" height="62" fill="#ff7f50"/>
<rect x="848" y="248" width="3" height="30" fill="#ff7f50"/>
<rect x="849" y="249" width="1" height="28" fill="#212121"/>
<rect x="853" y="255" width="1" height="24" fill="#1e90ff"/>
<rect x="852" y="267" width="3" height="12" fill="#1e90ff"/>
<rect x="853" y="268" width="1" height="10" fill="#212121"/>
<rect x="857" y="238" width="1" height="35" fill="#1e90ff"/>
<rect x="856" y="252" width="3" height="16" fill="#1e90ff"/>
<rect x="857" y="253" width="1" height="14" fill="#212121"/>
<rect x="861" y="245" width="1" height="8" fill="#1e90ff"/>
<rect x="860" y="247" width="3" height="6" fill="#1e90ff"/>
<rect x="861" y="248" width="1" height="4" fill="#212121"/>
<rect x="0" y="5" width="1" height="296" fill="#bdbdbd"/>
<rect x="941" y="150" width="1" height="142" fill="#ff6347"/>
<rect x="939" y="190" width="4" height="58" fill="#ff6347"/>
<polygon points="863,6 873,6 868,11" fill="#4a5858"/>
<polygon points="4,12 11,12 7.5,16" fill="#e0e0e0"/>
</g>
<circle cx="68.9" cy="58" r="3.05" fill="#32cd32"/>
<circle cx="108.9" cy="94" r="3.05" fill="#32cd32"/>
<circle cx="213" cy="101.9" r="3.05" fill="#32cd32"/>
<circle cx="444.8" cy="195.9" r="3.05" fill="#32cd32"/>
<circle cx="637.2" cy="222.1" r="3.05" fill="#32cd32"/>
<circle cx="197" cy="42.9" r="3.05" fill="#ffa500"/>
<circle cx="153" cy="115" r="3.05" fill="#ffa500"/>
<circle cx="285.2" cy="101" r="3.05" fill="#ffa500"/>
<circle cx="552.9" cy="133.9" r="3.05" fill="#ffa500"/>
<circle cx="609.2" cy="156" r="3.05" fill="#ffa500"/>
<circle cx="777.2" cy="173" r="3.05" fill="#ffa500"/>
<g shape-rendering="crispEdges">
<polyline points="2.5,363.2 8.0,362.5 15.0,358.8 20.8,356.3 26.4,353.8 32.7,351.3 37.7,349.4 46.0,348.0 53.0,347.0 58.0,346.5 65.0,348.4 82.0,347.0 92.5,347.9 98.7,349.6 104.0,350.5 117.0,349.4 122.6,347.1 127.7,345.0 134.6,343.1 140.0,344.0 146.4,344.9 174.3,344.9 177.6,347.4 182.5,349.3 187.5,350.7 191.0,351.8 207.0,351.8 212.0,351.5 217.0,350.0 224.4,347.7 230.0,342.8 236.0,338.0 242.0,336.0 250.0,335.5 260.0,337.5 268.0,340.0 272.0,341.3 412.3,341.3 414.8,346.6 416.4,356.4 418.9,369.6 421.4,381.0 424.6,389.3 428.8,397.5 434.5,403.2 440.2,405.7 454.0,404.0 462.0,401.5 469.9,398.3 476.4,393.4 487.9,383.5 499.4,372.8 507.6,367.1 512.5,364.6 519.1,362.2 526.0,361.5 532.0,363.5 540.0,366.0 548.7,367.6 589.7,367.6 594.6,372.8 601.2,376.5 605.0,377.4 619.0,377.4 622.6,379.4 631.0,380.5 640.0,380.0 650.0,375.5 654.6,373.5 661.0,371.5 670.0,372.0 680.0,370.0 695.0,367.5 704.0,362.5 710.5,360.5 715.0,358.5 721.0,356.0 727.0,353.5 735.0,351.5 745.0,350.5 755.0,352.0 762.0,353.5 769.6,354.4 861.5,354.4" fill="none" stroke="#32cd32" stroke-width="1" stroke-dasharray="3 3"/>
<polyline points="0.0,433.3 58.3,433.3 58.8,425.0 60.4,406.5 64.8,386.4 81.8,386.0 83.6,378.3 86.2,372.0 88.7,365.7 93.0,360.7 99.4,355.9 104.4,353.5 139.0,353.5 141.5,350.2 146.4,346.1 150.0,346.5 156.0,350.0 161.0,353.5 167.0,354.5 173.0,353.5 177.6,353.0 190.0,352.5 195.0,352.5 200.0,354.0 207.0,354.3 257.3,354.3 260.5,350.2 265.5,344.4 269.6,343.1 280.0,343.3 288.0,344.5 295.0,345.7 301.5,349.0 308.0,354.8 313.8,360.5 319.6,366.3 325.3,370.9 331.0,374.2 337.6,378.1 344.2,380.2 350.0,382.7 355.7,386.0 361.4,390.1 367.2,395.0 373.7,400.4 379.5,403.2 385.2,406.5 391.8,410.6 397.5,413.1 404.0,415.5 413.0,416.0 421.0,415.0 430.0,412.0 441.0,410.5 525.7,410.3 526.5,405.7 527.3,400.8 529.8,392.5 532.2,387.6 534.7,381.9 538.8,376.1 543.7,372.0 547.0,370.4 555.2,373.7 562.0,376.0 568.4,378.6 575.0,381.0 582.0,383.0 590.0,383.0 599.6,380.0 605.0,379.5 612.0,381.5 618.5,381.5 624.0,380.3 745.0,380.3 746.9,376.2 749.5,370.5 752.8,365.2 758.9,358.7 763.8,356.5 772.0,356.2 780.0,357.0 788.0,358.3 794.2,359.8 800.8,361.9 806.5,363.6 815.0,367.0 822.0,368.5 830.0,370.5 836.0,372.0 842.0,376.5 851.0,384.5 860.8,389.1" fill="none" stroke="#db7093" stroke-width="1" stroke-dasharray="3 3"/>
<polyline points="0.0,362.0 1.3,361.7 8.8,361.3 13.8,357.2 20.0,353.8 27.0,348.8 32.7,347.5 46.5,347.1 52.8,345.0 56.6,345.6 60.4,347.5 65.4,348.4 71.7,346.6 81.8,346.6 88.0,347.9 95.6,350.0 104.4,351.6 113.2,348.1 120.8,345.6 128.3,341.2 133.3,340.6 137.0,341.0 148.0,346.1 161.2,355.9 172.7,354.3 177.6,353.0 190.8,351.8 193.2,351.3 200.6,355.1 206.4,355.4 208.8,353.9 217.0,347.7 222.0,345.2 231.8,336.2 241.7,333.7 246.6,333.4 256.4,335.4 264.6,337.5 272.9,342.4 280.2,343.6 287.6,346.9 294.2,347.4 304.8,359.7 315.5,372.0 320.4,374.2 325.3,377.4 339.3,383.0 347.5,383.5 355.7,391.7 367.2,402.4 375.4,405.7 382.0,410.6 394.3,415.9 413.2,415.9 421.4,414.7 429.6,411.4 440.2,406.5 454.2,402.4 460.0,400.4 465.7,399.1 470.0,394.5 476.4,387.6 490.4,372.8 501.0,363.8 507.6,361.3 517.5,360.0 521.6,359.4 525.7,360.5 532.2,363.0 540.5,365.5 548.7,370.9 558.5,377.8 573.3,384.0 589.7,383.5 599.6,379.4 604.5,379.1 614.4,383.5 618.5,382.4 624.2,380.2 630.8,380.2 634.0,380.0 644.8,374.1 654.6,369.7 669.4,370.2 679.3,367.5 695.7,365.2 702.2,359.0 710.5,356.0 722.0,353.2 730.2,350.4 738.4,349.1 746.6,349.5 759.7,352.4 772.0,356.0 788.0,360.2 798.3,363.6 806.0,366.2 814.9,370.4 822.5,370.6 829.6,373.4 836.0,373.8 851.9,389.8 862.0,397.7" fill="none" stroke="#d3d3d3" stroke-width="1"/>
<polyline points="0.0,362.0 1.3,361.7 8.8,361.3 13.8,357.2 20.0,353.8 27.0,348.8 32.7,347.5 46.5,347.1 52.8,345.0 56.6,345.6 57.5,346.1" fill="none" stroke="#3cb371" stroke-width="3.6" stroke-linejoin="round"/>
<polyline points="65.0,348.3 65.4,348.4 71.7,346.6 81.8,346.6 82.0,346.6" fill="none" stroke="#3cb371" stroke-width="3.6" stroke-linejoin="round"/>
<polyline points="104.0,351.5 104.4,351.6 113.2,348.1 120.8,345.6 128.3,341.2 133.3,340.6 137.0,341.0" fill="none" stroke="#3cb371" stroke-width="3.6" stroke-linejoin="round"/>
<polyline points="208.0,354.4 208.8,353.9 217.0,347.7 222.0,345.2 231.8,336.2 241.7,333.7 246.6,333.4 256.4,335.4 264.6,337.5 265.0,337.7" fill="none" stroke="#3cb371" stroke-width="3.6" stroke-linejoin="round"/>
<polyline points="440.0,406.6 440.2,406.5 454.2,402.4 460.0,400.4 465.7,399.1 470.0,394.5 476.4,387.6 490.4,372.8 501.0,363.8 507.6,361.3 517.5,360.0 521.6,359.4 525.7,360.5 526.0,360.6" fill="none" stroke="#3cb371" stroke-width="3.6" stroke-linejoin="round"/>
<polyline points="631.0,380.2 634.0,380.0 644.8,374.1 654.6,369.7 669.4,370.2 679.3,367.5 695.7,365.2 702.2,359.0 710.5,356.0 722.0,353.2 730.2,350.4 738.4,349.1 746.6,349.5 747.0,349.6" fill="none" stroke="#3cb371" stroke-width="3.6" stroke-linejoin="round"/>
<polyline points="148.0,346.1 161.2,355.9 172.7,354.3 173.0,354.2" fill="none" stroke="#dc143c" stroke-width="3.6" stroke-linejoin="round"/>
<polyline points="193.0,351.3 193.2,351.3 200.6,355.1 206.4,355.4 206.5,355.3" fill="none" stroke="#dc143c" stroke-width="3.6" stroke-linejoin="round"/>
<polyline points="280.0,343.6 280.2,343.6 287.6,346.9 294.2,347.4 304.8,359.7 315.5,372.0 320.4,374.2 325.3,377.4 339.3,383.0 347.5,383.5 355.7,391.7 367.2,402.4 375.4,405.7 382.0,410.6 394.3,415.9 413.2,415.9 414.0,415.8" fill="none" stroke="#dc143c" stroke-width="3.6" stroke-linejoin="round"/>
<polyline points="548.7,370.9 558.5,377.8 573.3,384.0 589.7,383.5 590.0,383.4" fill="none" stroke="#dc143c" stroke-width="3.6" stroke-linejoin="round"/>
<polyline points="604.5,379.1 614.4,383.5 618.5,382.4" fill="none" stroke="#dc143c" stroke-width="3.6" stroke-linejoin="round"/>
<polyline points="772.0,356.0 788.0,360.2 798.3,363.6 806.0,366.2 814.9,370.4 822.5,370.6 829.6,373.4 836.0,373.8 851.9,389.8 862.0,397.7" fill="none" stroke="#dc143c" stroke-width="3.6" stroke-linejoin="round"/>
</g>
</svg>

<div style="left:17px;top:9px;font-size:10px;text-rendering:geometricPrecision;line-height:12px;color:#e8e8e8;white-space:nowrap;transform:scaleX(.9415);transform-origin:0 0" id="title">AUDUSD,M15</div>
<div style="left:6px;top:332px;font-size:10px;text-rendering:geometricPrecision;line-height:12px;color:#e8e8e8;white-space:nowrap;transform:scaleX(.9265);transform-origin:0 0" id="ind">AUDUSD M15 smoothed repulse (17) -0.0577 -0.2256 -0.2549 -0.2549</div>

<div class="pl" style="top:21px">0.72285</div><div class="tick" style="top:25px"></div>
<div class="pl" style="top:55px">0.72200</div><div class="tick" style="top:59px"></div>
<div class="pl" style="top:89px">0.72115</div><div class="tick" style="top:93px"></div>
<div class="pl" style="top:123px">0.72030</div><div class="tick" style="top:127px"></div>
<div class="pl" style="top:157px">0.71945</div><div class="tick" style="top:161px"></div>
<div class="pl" style="top:191px">0.71860</div><div class="tick" style="top:195px"></div>
<div class="pl" style="top:225px">0.71775</div><div class="tick" style="top:229px"></div>
<div class="pl" style="top:259px">0.71690</div><div class="tick" style="top:263px"></div>
<div class="pl" style="top:293px">0.71605</div><div class="tick" style="top:297px"></div>
<div style="left:1048px;top:238px;width:41px;height:5px;background:#ff9000"></div>
<div class="pl" style="top:239px;color:#141414">0.71741</div>
<div style="left:1048px;top:242px;width:41px;height:11px;background:#c8c8c8"></div>
<div class="pl" style="top:243px;color:#141414">0.71730</div>
<div class="pl" style="left:1050px;top:305px">100</div>
<div class="pl" style="left:1050px;top:314px">20</div>
<div class="pl" style="left:1050px;top:330px">0.0598</div>
<div class="pl" style="left:1050px;top:337px">0.00</div>
<div class="pl" style="left:1050px;top:428px">-0.447</div>
<div class="tick" style="top:341px"></div>
<div class="tick" style="top:304px;width:1px"></div>
<div class="tick" style="top:324px;width:1px"></div>
<div class="tick" style="top:329px;width:1px"></div>
<div class="tick" style="top:439px"></div>

<div class="btn" style="left:1px"><span style="transform:scaleX(0.927)">GBPAUD</span></div>
<div class="btn" style="left:47px"><span style="transform:scaleX(0.913)">GBPCAD</span></div>
<div class="btn" style="left:93px"><span style="transform:scaleX(0.906)">GBPNZD</span></div>
<div class="btn sel" style="left:139px"><span style="transform:scaleX(0.939)">AUDUSD</span></div>
<div class="btn" style="left:185px"><span style="transform:scaleX(0.905)">EURUSD</span></div>
<div class="btn" style="left:231px"><span style="transform:scaleX(0.922)">EURGBP</span></div>
<div class="btn" style="left:277px"><span style="transform:scaleX(0.924)">EURJPY</span></div>
<div class="btn" style="left:323px"><span style="transform:scaleX(0.916)">GBPUSD</span></div>
<div class="btn" style="left:369px"><span style="transform:scaleX(0.915)">GBPJPY</span></div>
<div class="btn" style="left:415px"><span style="transform:scaleX(0.939)">USDCAD</span></div>
<div class="btn" style="left:461px"><span style="transform:scaleX(0.957)">USDCHF</span></div>
<div class="btn" style="left:507px"><span style="transform:scaleX(0.933)">USDJPY</span></div>
<div class="btn" style="left:553px"><span style="transform:scaleX(0.901)">GOLD</span></div>
<div class="btn hot br" style="left:599px"><span style="transform:scaleX(0.869)">[DAX40]</span></div>
<div class="btn hot br" style="left:645px"><span style="transform:scaleX(0.885)">[NQ100]</span></div>
<div class="btn" style="left:691px"><span style="transform:scaleX(0.947)">AUDCAD</span></div>
<div class="btn" style="left:737px"><span style="transform:scaleX(0.96)">AUDNZD</span></div>
<div class="btn br" style="left:783px"><span style="transform:scaleX(0.891)">[DJI30]</span></div>
<div class="btn br" style="left:829px"><span style="transform:scaleX(0.886)">[SP500]</span></div>
<div class="btn" style="left:875px"><span style="transform:scaleX(0.955)">EURAUD</span></div>
<div style="left:46px;top:310px;width:1px;height:4px;background:#b88434"></div>

<div class="tt" style="left:1px"></div><div class="tl" style="left:0px">23 Nov 2021</div>
<div class="tt" style="left:65px"></div><div class="tl" style="left:64px">24 Nov 01:00</div>
<div class="tt" style="left:129px"></div><div class="tl" style="left:128px">24 Nov 05:00</div>
<div class="tt" style="left:193px"></div><div class="tl" style="left:192px">24 Nov 09:00</div>
<div class="tt" style="left:257px"></div><div class="tl" style="left:256px">24 Nov 13:00</div>
<div class="tt" style="left:321px"></div><div class="tl" style="left:320px">24 Nov 17:00</div>
<div class="tt" style="left:385px"></div><div class="tl" style="left:384px">24 Nov 21:00</div>
<div class="tt" style="left:449px"></div><div class="tl" style="left:448px">25 Nov 01:00</div>
<div class="tt" style="left:513px"></div><div class="tl" style="left:512px">25 Nov 05:00</div>
<div class="tt" style="left:577px"></div><div class="tl" style="left:576px">25 Nov 09:00</div>
<div class="tt" style="left:641px"></div><div class="tl" style="left:640px">25 Nov 13:00</div>
<div class="tt" style="left:705px"></div><div class="tl" style="left:704px">25 Nov 17:00</div>
<div class="tt" style="left:769px"></div><div class="tl" style="left:768px">25 Nov 21:00</div>
<div class="tt" style="left:833px"></div><div class="tl" style="left:832px">26 Nov 01:00</div>

<!-- tab bar -->

<div style="left:0;top:460px;width:1094px;height:2px;background:#fff"></div>
<div style="left:0;top:462px;width:1094px;height:1px;background:#000"></div>
<div style="left:0;top:463px;width:1097px;height:19px;background:#f0f0f0"></div>
<div style="left:0;top:482px;width:1097px;height:1px;background:#ffffff"></div>
<div style="left:0;top:483px;width:1097px;height:2px;background:#f0f0f0"></div>
<div style="left:0;top:485px;width:1097px;height:1px;background:#f4f4f4"></div><div style="left:0;top:486px;width:1097px;height:1px;background:#9a9a9a"></div>
<div style="left:1092px;top:2px;width:2px;height:460px;background:#fdfdfd"></div>
<div style="left:1093px;top:463px;width:1px;height:24px;background:#fdfdfd"></div>
<div style="left:1092px;top:485px;width:1px;height:2px;background:#fdfdfd"></div>
<div style="left:1094px;top:0;width:1px;height:487px;background:#6c6c6c"></div>
<div style="left:1095px;top:0;width:1px;height:487px;background:#c8c8c8"></div>
<div style="left:1096px;top:0;width:1px;height:487px;background:#808080"></div>
<div class="tab" style="left:14.6px;transform:scaleX(.907)">USDCAD,H1</div>
<div class="sep" style="left:90px"></div>
<div class="tab" style="left:101.2px;transform:scaleX(.978)">[NQ100],M15</div>
<div class="sep" style="left:182px"></div>
<div class="tab" style="left:193.1px;transform:scaleX(.965)">AUDNZD,M15</div>
<div class="sep" style="left:278px"></div>
<div class="tab" style="left:289.4px;transform:scaleX(.931)">GOLD,M15</div>
<div style="left:0;top:463px;width:1094px;height:1px;background:#fbfbfb"></div>
<div style="left:359px;top:460px;width:94px;height:20px;background:#fff"></div>
<div style="left:358px;top:462px;width:96px;height:19px;border:1px solid #000;border-top:none;"></div>
<div style="left:357px;top:463px;width:1px;height:18px;background:#fbfbfb"></div>
<div style="left:454px;top:463px;width:1px;height:18px;background:#fbfbfb"></div>
<div class="tab" style="left:370.4px;color:#000;transform:scaleX(.923)">AUDUSD,M15</div>
<svg width="1097" height="487" viewBox="0 0 1097 487"><polygon points="1062,471 1066,468 1066,474" fill="#8a8a8a"/><polygon points="1085,471 1081,468 1081,474" fill="#8a8a8a"/></svg>
</body></html>
